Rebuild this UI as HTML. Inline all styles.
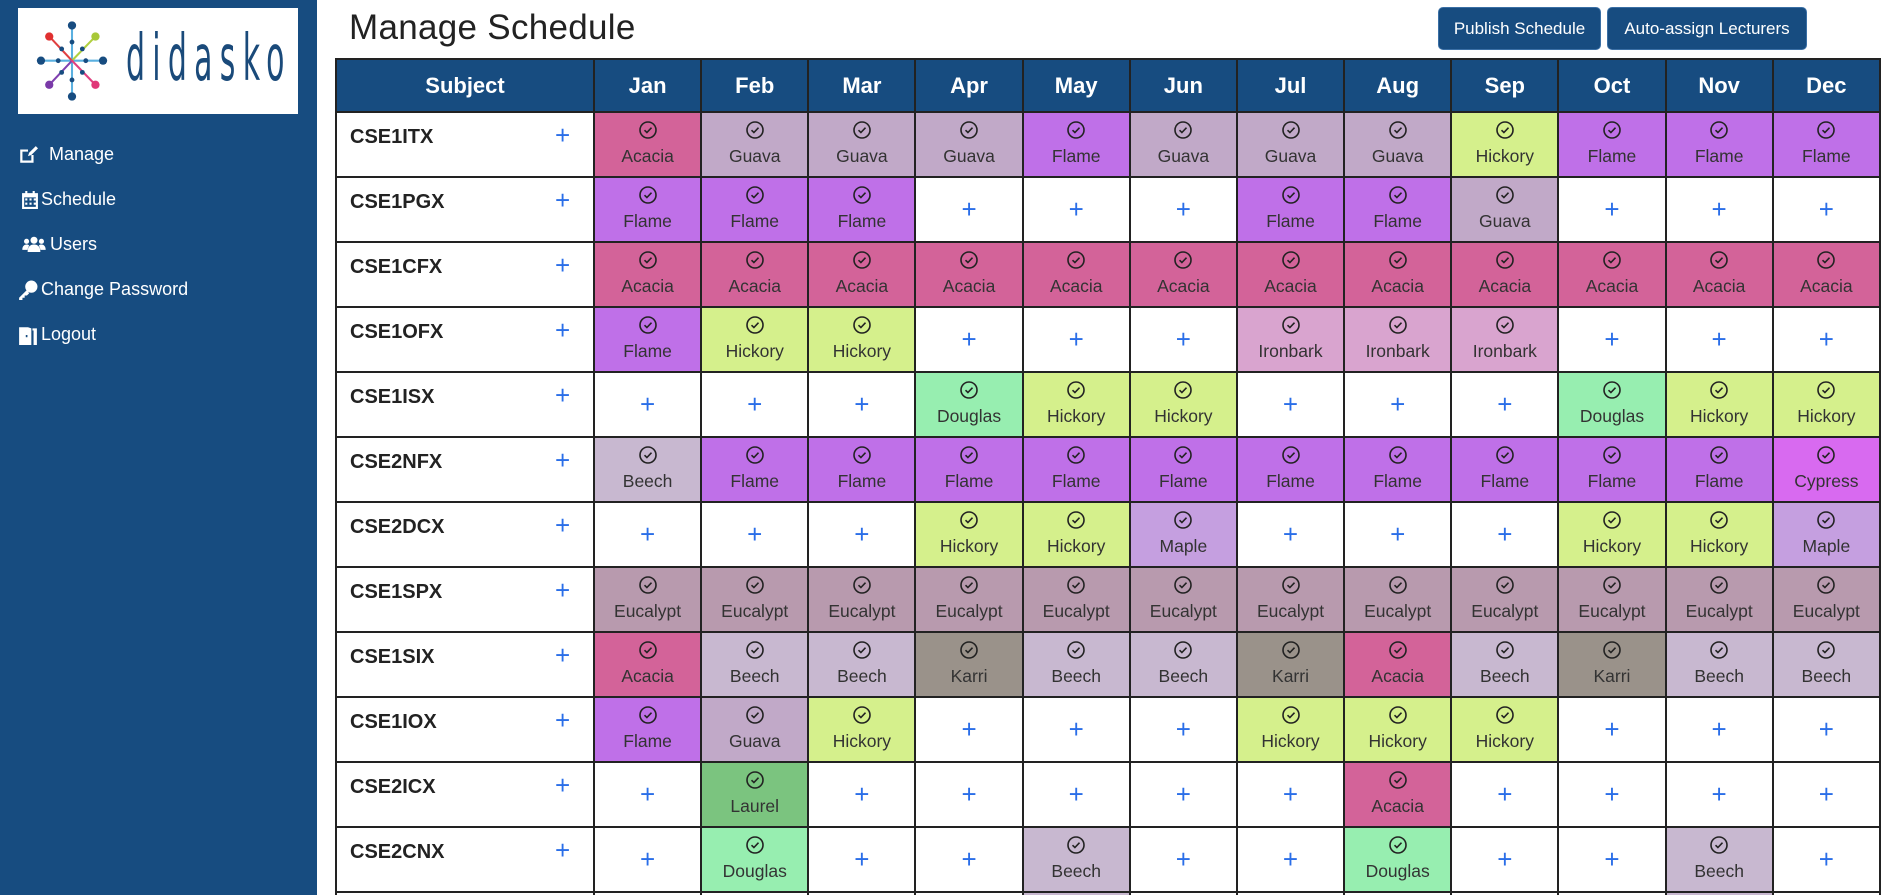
<!DOCTYPE html>
<html><head><meta charset="utf-8"><style>
*{box-sizing:border-box;margin:0;padding:0}
html,body{width:1897px;height:895px;overflow:hidden}
body{background:#fff;font-family:"Liberation Sans",sans-serif;position:relative}
.side{position:absolute;left:0;top:0;width:317px;height:895px;background:#174c80}
.logo{position:absolute;left:18px;top:8px;width:280px;height:106px;background:#fff;overflow:hidden}
.logo span{position:absolute;left:108px;top:14px;font-size:64px;color:#1a4a7a;letter-spacing:14px;transform:scaleX(.52);transform-origin:left;font-family:"DejaVu Sans Condensed","Liberation Sans",sans-serif;font-weight:300}
.nav{position:absolute;left:18px;color:#fff;font-size:18px;display:flex;align-items:center;gap:6px}
.nav svg{fill:#fff}
h1{position:absolute;left:349px;top:8px;font-size:35px;font-weight:normal;color:#222;letter-spacing:.3px}
.btn{position:absolute;top:7px;height:43px;background:#174c80;color:#fff;border:1px solid #3a6fa5;border-radius:5px;font-size:17px;line-height:41px;text-align:center}
table{position:absolute;left:335px;top:58px;width:1546px;border-collapse:collapse;table-layout:fixed}
th,td{border:2px solid #222}
th{background:#174c80;color:#fff;font-size:22px;height:53px;font-weight:bold}
td{height:65px;text-align:center;font-size:17.5px;color:#333;vertical-align:top;position:relative}
tr.last td{height:3px;border-bottom:0}
td.s{text-align:left;font-weight:bold;font-size:20px;color:#222;padding:13px 0 0 13px}
td.s i,td.p i{position:absolute;font-style:normal;color:#2a6ee8;font-size:26px;font-weight:normal}
td.s i{left:218px;top:7px}
td.p i{left:0;right:0;top:16px}
td svg{display:block;margin:7px auto 6px}
.A{background:#d36399}.G{background:#c1a9c8}.F{background:#bf70e8}.H{background:#d5f08c}.I{background:#d9a4cf}.D{background:#97eeb0}.B{background:#c8b8d0}.C{background:#d86af0}.M{background:#c59fe0}.E{background:#b89aae}.K{background:#9a928a}.L{background:#7bc47f}
</style></head><body>
<svg width="0" height="0" style="position:absolute"><defs><symbol id="ck" viewBox="0 0 20 20"><circle cx="10" cy="10" r="8" fill="none" stroke="#222" stroke-width="1.6"/><path d="M6.5 10.2l2.4 2.3 4.6-4.8" fill="none" stroke="#222" stroke-width="1.6"/></symbol></defs></svg>
<div class="side">
<div class="logo">
<svg width="100" height="100" viewBox="0 0 110 145" style="position:absolute;left:4px;top:3px">
<g stroke-width="3" stroke-linecap="round">
<line x1="55" y1="72" x2="55" y2="25" stroke="#5ab0e0"/><line x1="55" y1="72" x2="55" y2="120" stroke="#5ab0e0"/>
<line x1="55" y1="72" x2="14" y2="72" stroke="#5ab0e0"/><line x1="55" y1="72" x2="96" y2="72" stroke="#5ab0e0"/>
<line x1="55" y1="72" x2="25" y2="40" stroke="#e04040"/><line x1="55" y1="72" x2="86" y2="40" stroke="#b0d040"/>
<line x1="55" y1="72" x2="25" y2="104" stroke="#8040b0"/><line x1="55" y1="72" x2="86" y2="104" stroke="#e04080"/>
</g>
<g fill="#174c80"><circle cx="55" cy="21" r="6"/><circle cx="55" cy="124" r="6"/><circle cx="10" cy="72" r="6"/><circle cx="100" cy="72" r="6"/>
<circle cx="40" cy="55" r="3.5"/><circle cx="70" cy="55" r="3.5"/><circle cx="40" cy="89" r="3.5"/><circle cx="70" cy="89" r="3.5"/><circle cx="35" cy="72" r="3.5"/><circle cx="75" cy="72" r="3.5"/><circle cx="55" cy="45" r="3.5"/><circle cx="55" cy="100" r="3.5"/></g>
<circle cx="22" cy="37" r="6" fill="#e03030"/><circle cx="89" cy="37" r="6" fill="#a8c838"/><circle cx="22" cy="107" r="6" fill="#7a3aa8"/><circle cx="89" cy="107" r="6" fill="#e03878"/>
</svg>
<span>didasko</span></div>
<div class="nav" style="top:144px"><svg width="20" height="20" viewBox="0 0 18 18"><path d="M2 4h7v2H4v8h8V9h2v7H2z M9 10l1-3 6-6 2 2-6 6z"/></svg>&nbsp;Manage</div>
<div class="nav" style="top:189px;left:22px;gap:3px"><svg width="16" height="18" viewBox="0 0 15 17"><path d="M3 0h2v2h5V0h2v2h3v15H0V2h3z M2 6v9h11V6z M3 7h2v2H3zm4 0h2v2H7zm4 0h2v2h-2zM3 11h2v2H3zm4 0h2v2H7zm4 0h2v2h-2z"/></svg>Schedule</div>
<div class="nav" style="top:234px;left:22px;gap:4px"><svg width="24" height="17" viewBox="0 0 22 16"><circle cx="11" cy="4" r="3.3"/><circle cx="4" cy="5" r="2.4"/><circle cx="18" cy="5" r="2.4"/><path d="M5 15c0-5 2.5-7 6-7s6 2 6 7z M0 13c0-3 1.5-5 4-5 1 0 2 .3 2.5 1-1 1.5-1.5 3-1.5 4z M22 13c0-3-1.5-5-4-5-1 0-2 .3-2.5 1 1 1.5 1.5 3 1.5 4z"/></svg>Users</div>
<div class="nav" style="top:279px;gap:3px"><svg width="20" height="20" viewBox="0 0 18 18"><circle cx="12" cy="6" r="5.5"/><path d="M8 9L1 16v2h3v-2h2v-2h2l2-2z"/></svg>Change Password</div>
<div class="nav" style="top:324px;gap:3px"><svg width="20" height="20" viewBox="0 0 18 18"><path d="M1 2h8l3 1v15H1z M13 3h4v15h-3V5h-1z" /><rect x="7" y="9" width="1.5" height="2" fill="#174c80"/></svg>Logout</div>
</div>
<h1>Manage Schedule</h1>
<div class="btn" style="left:1438px;width:163px">Publish Schedule</div>
<div class="btn" style="left:1607px;width:200px">Auto-assign Lecturers</div>
<table>
<colgroup><col style="width:258px"><col span="12"></colgroup>
<tr><th>Subject</th><th>Jan</th><th>Feb</th><th>Mar</th><th>Apr</th><th>May</th><th>Jun</th><th>Jul</th><th>Aug</th><th>Sep</th><th>Oct</th><th>Nov</th><th>Dec</th></tr>
<tr><td class="s">CSE1ITX<i>+</i></td><td class="A"><svg width="20" height="20"><use href="#ck"/></svg>Acacia</td><td class="G"><svg width="20" height="20"><use href="#ck"/></svg>Guava</td><td class="G"><svg width="20" height="20"><use href="#ck"/></svg>Guava</td><td class="G"><svg width="20" height="20"><use href="#ck"/></svg>Guava</td><td class="F"><svg width="20" height="20"><use href="#ck"/></svg>Flame</td><td class="G"><svg width="20" height="20"><use href="#ck"/></svg>Guava</td><td class="G"><svg width="20" height="20"><use href="#ck"/></svg>Guava</td><td class="G"><svg width="20" height="20"><use href="#ck"/></svg>Guava</td><td class="H"><svg width="20" height="20"><use href="#ck"/></svg>Hickory</td><td class="F"><svg width="20" height="20"><use href="#ck"/></svg>Flame</td><td class="F"><svg width="20" height="20"><use href="#ck"/></svg>Flame</td><td class="F"><svg width="20" height="20"><use href="#ck"/></svg>Flame</td></tr>
<tr><td class="s">CSE1PGX<i>+</i></td><td class="F"><svg width="20" height="20"><use href="#ck"/></svg>Flame</td><td class="F"><svg width="20" height="20"><use href="#ck"/></svg>Flame</td><td class="F"><svg width="20" height="20"><use href="#ck"/></svg>Flame</td><td class="p"><i>+</i></td><td class="p"><i>+</i></td><td class="p"><i>+</i></td><td class="F"><svg width="20" height="20"><use href="#ck"/></svg>Flame</td><td class="F"><svg width="20" height="20"><use href="#ck"/></svg>Flame</td><td class="G"><svg width="20" height="20"><use href="#ck"/></svg>Guava</td><td class="p"><i>+</i></td><td class="p"><i>+</i></td><td class="p"><i>+</i></td></tr>
<tr><td class="s">CSE1CFX<i>+</i></td><td class="A"><svg width="20" height="20"><use href="#ck"/></svg>Acacia</td><td class="A"><svg width="20" height="20"><use href="#ck"/></svg>Acacia</td><td class="A"><svg width="20" height="20"><use href="#ck"/></svg>Acacia</td><td class="A"><svg width="20" height="20"><use href="#ck"/></svg>Acacia</td><td class="A"><svg width="20" height="20"><use href="#ck"/></svg>Acacia</td><td class="A"><svg width="20" height="20"><use href="#ck"/></svg>Acacia</td><td class="A"><svg width="20" height="20"><use href="#ck"/></svg>Acacia</td><td class="A"><svg width="20" height="20"><use href="#ck"/></svg>Acacia</td><td class="A"><svg width="20" height="20"><use href="#ck"/></svg>Acacia</td><td class="A"><svg width="20" height="20"><use href="#ck"/></svg>Acacia</td><td class="A"><svg width="20" height="20"><use href="#ck"/></svg>Acacia</td><td class="A"><svg width="20" height="20"><use href="#ck"/></svg>Acacia</td></tr>
<tr><td class="s">CSE1OFX<i>+</i></td><td class="F"><svg width="20" height="20"><use href="#ck"/></svg>Flame</td><td class="H"><svg width="20" height="20"><use href="#ck"/></svg>Hickory</td><td class="H"><svg width="20" height="20"><use href="#ck"/></svg>Hickory</td><td class="p"><i>+</i></td><td class="p"><i>+</i></td><td class="p"><i>+</i></td><td class="I"><svg width="20" height="20"><use href="#ck"/></svg>Ironbark</td><td class="I"><svg width="20" height="20"><use href="#ck"/></svg>Ironbark</td><td class="I"><svg width="20" height="20"><use href="#ck"/></svg>Ironbark</td><td class="p"><i>+</i></td><td class="p"><i>+</i></td><td class="p"><i>+</i></td></tr>
<tr><td class="s">CSE1ISX<i>+</i></td><td class="p"><i>+</i></td><td class="p"><i>+</i></td><td class="p"><i>+</i></td><td class="D"><svg width="20" height="20"><use href="#ck"/></svg>Douglas</td><td class="H"><svg width="20" height="20"><use href="#ck"/></svg>Hickory</td><td class="H"><svg width="20" height="20"><use href="#ck"/></svg>Hickory</td><td class="p"><i>+</i></td><td class="p"><i>+</i></td><td class="p"><i>+</i></td><td class="D"><svg width="20" height="20"><use href="#ck"/></svg>Douglas</td><td class="H"><svg width="20" height="20"><use href="#ck"/></svg>Hickory</td><td class="H"><svg width="20" height="20"><use href="#ck"/></svg>Hickory</td></tr>
<tr><td class="s">CSE2NFX<i>+</i></td><td class="B"><svg width="20" height="20"><use href="#ck"/></svg>Beech</td><td class="F"><svg width="20" height="20"><use href="#ck"/></svg>Flame</td><td class="F"><svg width="20" height="20"><use href="#ck"/></svg>Flame</td><td class="F"><svg width="20" height="20"><use href="#ck"/></svg>Flame</td><td class="F"><svg width="20" height="20"><use href="#ck"/></svg>Flame</td><td class="F"><svg width="20" height="20"><use href="#ck"/></svg>Flame</td><td class="F"><svg width="20" height="20"><use href="#ck"/></svg>Flame</td><td class="F"><svg width="20" height="20"><use href="#ck"/></svg>Flame</td><td class="F"><svg width="20" height="20"><use href="#ck"/></svg>Flame</td><td class="F"><svg width="20" height="20"><use href="#ck"/></svg>Flame</td><td class="F"><svg width="20" height="20"><use href="#ck"/></svg>Flame</td><td class="C"><svg width="20" height="20"><use href="#ck"/></svg>Cypress</td></tr>
<tr><td class="s">CSE2DCX<i>+</i></td><td class="p"><i>+</i></td><td class="p"><i>+</i></td><td class="p"><i>+</i></td><td class="H"><svg width="20" height="20"><use href="#ck"/></svg>Hickory</td><td class="H"><svg width="20" height="20"><use href="#ck"/></svg>Hickory</td><td class="M"><svg width="20" height="20"><use href="#ck"/></svg>Maple</td><td class="p"><i>+</i></td><td class="p"><i>+</i></td><td class="p"><i>+</i></td><td class="H"><svg width="20" height="20"><use href="#ck"/></svg>Hickory</td><td class="H"><svg width="20" height="20"><use href="#ck"/></svg>Hickory</td><td class="M"><svg width="20" height="20"><use href="#ck"/></svg>Maple</td></tr>
<tr><td class="s">CSE1SPX<i>+</i></td><td class="E"><svg width="20" height="20"><use href="#ck"/></svg>Eucalypt</td><td class="E"><svg width="20" height="20"><use href="#ck"/></svg>Eucalypt</td><td class="E"><svg width="20" height="20"><use href="#ck"/></svg>Eucalypt</td><td class="E"><svg width="20" height="20"><use href="#ck"/></svg>Eucalypt</td><td class="E"><svg width="20" height="20"><use href="#ck"/></svg>Eucalypt</td><td class="E"><svg width="20" height="20"><use href="#ck"/></svg>Eucalypt</td><td class="E"><svg width="20" height="20"><use href="#ck"/></svg>Eucalypt</td><td class="E"><svg width="20" height="20"><use href="#ck"/></svg>Eucalypt</td><td class="E"><svg width="20" height="20"><use href="#ck"/></svg>Eucalypt</td><td class="E"><svg width="20" height="20"><use href="#ck"/></svg>Eucalypt</td><td class="E"><svg width="20" height="20"><use href="#ck"/></svg>Eucalypt</td><td class="E"><svg width="20" height="20"><use href="#ck"/></svg>Eucalypt</td></tr>
<tr><td class="s">CSE1SIX<i>+</i></td><td class="A"><svg width="20" height="20"><use href="#ck"/></svg>Acacia</td><td class="B"><svg width="20" height="20"><use href="#ck"/></svg>Beech</td><td class="B"><svg width="20" height="20"><use href="#ck"/></svg>Beech</td><td class="K"><svg width="20" height="20"><use href="#ck"/></svg>Karri</td><td class="B"><svg width="20" height="20"><use href="#ck"/></svg>Beech</td><td class="B"><svg width="20" height="20"><use href="#ck"/></svg>Beech</td><td class="K"><svg width="20" height="20"><use href="#ck"/></svg>Karri</td><td class="A"><svg width="20" height="20"><use href="#ck"/></svg>Acacia</td><td class="B"><svg width="20" height="20"><use href="#ck"/></svg>Beech</td><td class="K"><svg width="20" height="20"><use href="#ck"/></svg>Karri</td><td class="B"><svg width="20" height="20"><use href="#ck"/></svg>Beech</td><td class="B"><svg width="20" height="20"><use href="#ck"/></svg>Beech</td></tr>
<tr><td class="s">CSE1IOX<i>+</i></td><td class="F"><svg width="20" height="20"><use href="#ck"/></svg>Flame</td><td class="G"><svg width="20" height="20"><use href="#ck"/></svg>Guava</td><td class="H"><svg width="20" height="20"><use href="#ck"/></svg>Hickory</td><td class="p"><i>+</i></td><td class="p"><i>+</i></td><td class="p"><i>+</i></td><td class="H"><svg width="20" height="20"><use href="#ck"/></svg>Hickory</td><td class="H"><svg width="20" height="20"><use href="#ck"/></svg>Hickory</td><td class="H"><svg width="20" height="20"><use href="#ck"/></svg>Hickory</td><td class="p"><i>+</i></td><td class="p"><i>+</i></td><td class="p"><i>+</i></td></tr>
<tr><td class="s">CSE2ICX<i>+</i></td><td class="p"><i>+</i></td><td class="L"><svg width="20" height="20"><use href="#ck"/></svg>Laurel</td><td class="p"><i>+</i></td><td class="p"><i>+</i></td><td class="p"><i>+</i></td><td class="p"><i>+</i></td><td class="p"><i>+</i></td><td class="A"><svg width="20" height="20"><use href="#ck"/></svg>Acacia</td><td class="p"><i>+</i></td><td class="p"><i>+</i></td><td class="p"><i>+</i></td><td class="p"><i>+</i></td></tr>
<tr><td class="s">CSE2CNX<i>+</i></td><td class="p"><i>+</i></td><td class="D"><svg width="20" height="20"><use href="#ck"/></svg>Douglas</td><td class="p"><i>+</i></td><td class="p"><i>+</i></td><td class="B"><svg width="20" height="20"><use href="#ck"/></svg>Beech</td><td class="p"><i>+</i></td><td class="p"><i>+</i></td><td class="D"><svg width="20" height="20"><use href="#ck"/></svg>Douglas</td><td class="p"><i>+</i></td><td class="p"><i>+</i></td><td class="B"><svg width="20" height="20"><use href="#ck"/></svg>Beech</td><td class="p"><i>+</i></td></tr>
<tr class="last"><td></td><td></td><td></td><td></td><td></td><td class="B"></td><td></td><td></td><td></td><td></td><td></td><td class="B"></td><td></td></tr>
</table>
</body></html>
